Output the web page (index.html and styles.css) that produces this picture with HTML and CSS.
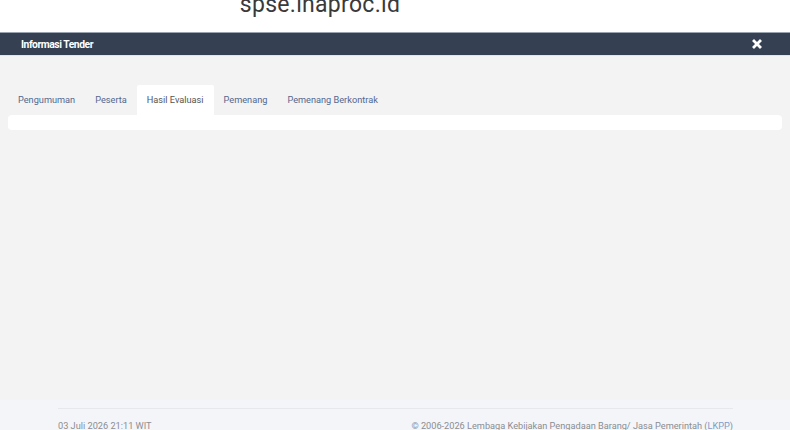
FILE: index.html
```html
<!DOCTYPE html>
<html lang="id">
<head>
   <meta charset="UTF-8">
   <meta name="viewport" content="width=device-width, initial-scale=1">
   <link rel="stylesheet" href="styles.css">
   <title>Informasi Tender</title>
</head>

<body>

   <div class="alamat">
      <span>spse.inaproc.id</span>
   </div>

   <div class="judul">
      <h1>Informasi Tender</h1>
      <svg class="tutup" width="10" height="10" viewBox="0 0 10 10">
         <path d="M2 2 L8 8 M8 2 L2 8" stroke="#fff" stroke-width="2.8" stroke-linecap="square"/>
      </svg>
   </div>

   <div class="isi">
      <ul class="tabs">
         <li><a href="#">Pengumuman</a></li>
         <li><a href="#">Peserta</a></li>
         <li class="aktif"><a href="#">Hasil Evaluasi</a></li>
         <li><a href="#">Pemenang</a></li>
         <li><a href="#">Pemenang Berkontrak</a></li>
      </ul>

      <div class="panel"></div>
   </div>

   <div class="rodape">
      <div class="linha">
         <span>03 Juli 2026 21:11 WIT</span>
         <span>&copy; 2006-2026 Lembaga Kebijakan Pengadaan Barang/ Jasa Pemerintah (<a href="#">LKPP</a>)</span>
      </div>
   </div>

</body>
</html>
```

FILE: styles.css
```css
* {
   margin:0;
   padding:0;
   box-sizing:border-box;
   font-family:Roboto, "Liberation Sans", sans-serif;
}

body {
   background:#f3f3f3;
   width:790px;
   height:430px;
   overflow:hidden;
   display:flex;
   flex-direction:column;
}

.alamat {
   background:#fff;
   height:32px;
   overflow:hidden;
   display:flex;
   justify-content:center;
}

.alamat span {
   font-size:23px;
   color:#3a3a3a;
   margin-top:-9px;
   margin-left:-150px;
   letter-spacing:0.3px;
}

.judul {
   background:#354153;
   border-top:1px solid #9aa3b0;
   border-bottom:1px solid #e2e4e7;
   height:24px;
   display:flex;
   align-items:center;
   justify-content:space-between;
   padding:0 28px 0 21px;
}

.judul h1 {
   color:#fff;
   font-size:10.3px;
   font-weight:bold;
   letter-spacing:-0.45px;
}

.tutup {
   display:block;
}

.isi {
   flex:1;
   padding:29px 8px 0 8px;
}

.tabs {
   list-style:none;
   display:flex;
}

.tabs a {
   display:block;
   padding:9px 10px 10px 10px;
   font-size:9.2px;
   color:#52688f;
   text-decoration:none;
}

.tabs .aktif a {
   background:#fff;
   color:#555;
   border-radius:2px 2px 0 0;
}

.panel {
   background:#fff;
   height:15px;
   border-radius:4px;
}

.rodape {
   background:#f4f5f8;
   height:30px;
   padding:8px 57px 0 58px;
}

.linha {
   border-top:1px solid #e6e8ec;
   display:flex;
   justify-content:space-between;
   padding-top:11px;
   font-size:9.2px;
   color:#8a8d93;
}

.linha a {
   color:#7f9cc9;
   text-decoration:none;
}
```
